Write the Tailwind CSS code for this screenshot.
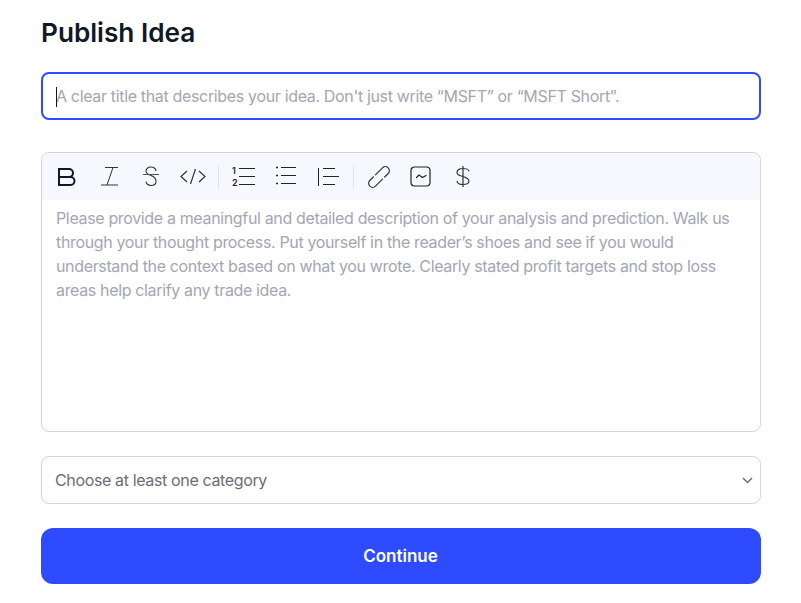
<!DOCTYPE html>
<html lang="en">
<head>
  <meta charset="UTF-8">
  <title>Publish Idea</title>
  <script src="https://cdn.jsdelivr.net/npm/@tailwindcss/browser@4"></script>
</head>
<body class="bg-white font-['Inter',sans-serif] overflow-hidden">
  <div class="w-[801px] h-[603px] px-[41px] pt-[16px]">
    <h1 class="text-[26.2px] leading-[34px] font-semibold text-[#111827]">Publish Idea</h1>

    <!-- title input -->
    <div class="relative mt-[22px] w-[720px] h-[48px] border-2 border-[#2f4bff] rounded-lg flex items-center pl-[13px]">
      <span class="absolute left-[13px] top-[13px] w-px h-[20px] bg-[#111827]"></span>
      <span class="text-base tracking-[-0.34px] text-[#a3a6b1] whitespace-nowrap">A clear title that describes your idea. Don't just write “MSFT” or “MSFT Short”.</span>
    </div>

    <!-- editor -->
    <div class="mt-[32px] w-[720px] h-[280px] border border-[#d4d4dc] rounded-lg overflow-hidden">
      <div class="h-[47px] bg-[#f7f8fd] flex items-center pl-[14px]">
        <svg width="21" height="20" viewBox="0 0 21 20" fill="none" stroke="#111827" stroke-width="2"><path d="M3 2h10a4 4 0 0 1 0 8H3zM3 10h11.500a4 4 0 0 1 0 8H3z"/></svg>
        <svg class="ml-[23px]" width="18" height="19" viewBox="0 0 18 19" fill="none" stroke="#333" stroke-width="1"><path d="M5 .5h13M1 18h17M13 .5 7 18"/></svg>
        <svg class="ml-[24px]" width="18" height="21" viewBox="0 0 18 21" fill="none" stroke="#333" stroke-width="1.100"><path d="M14 5c0-2-2-4-5-4S4 3 4 5s2 3.500 5 4.500 5 3 5 6-2 4-5 4-5-2-5-4"/><path d="M1 8.500h16" stroke="#555"/></svg>
        <svg class="ml-[20px]" width="26" height="17" viewBox="0 0 26 17" fill="none" stroke="#333" stroke-width="1.200"><path d="M7 3 1 8.500 7 14M19 3l6 5.500-6 5.500M15.500 1l-5 15"/></svg>
        <span class="ml-[12px] w-px h-[24px] bg-[#e2e3ea]"></span>
        <svg class="ml-[12px]" width="25" height="21" viewBox="0 0 25 21" fill="none" stroke="#222" stroke-width="1"><path d="M8 2.500h16M8 10.500h16M8 18.500h16"/><text x="1" y="8" font-size="9" font-weight="600" fill="#222" stroke="none" font-family="Inter">1</text><text x="1" y="20" font-size="9" font-weight="600" fill="#222" stroke="none" font-family="Inter">2</text></svg>
        <svg class="ml-[19px]" width="22" height="21" viewBox="0 0 22 21" fill="none" stroke="#222" stroke-width="1"><path d="M6 1.500h15M6 9.500h15M6 17.500h15"/><path d="M1 1.500h2M1 9.500h2M1 17.500h2" stroke-width="1.500"/></svg>
        <svg class="ml-[21px]" width="21" height="20" viewBox="0 0 21 20" fill="none" stroke="#222" stroke-width="1"><path d="M.500 1v18M5 1.500h12M5 9.500h16M5 17.500h12"/></svg>
        <span class="ml-[14px] w-px h-[24px] bg-[#e2e3ea]"></span>
        <svg class="ml-[14px]" width="22" height="22" viewBox="-11 -11 22 22" fill="none" stroke="#333" stroke-width="1.200" stroke-linecap="round"><g transform="rotate(-45)"><path d="M-1-4H9a4 4 0 0 1 0 8H4"/><path d="M1 4H-9a4 4 0 0 1 0-8H-4"/></g></svg>
        <svg class="ml-[20px]" width="21" height="21" viewBox="0 0 21 21" fill="none" stroke="#222" stroke-width="1.200"><rect x="1" y="1" width="19" height="19" rx="3.500"/><path d="M6.500 11.500 9 9l3.500 2.500L16 9.500" stroke-linecap="round"/></svg>
        <svg class="ml-[25px]" width="14" height="21" viewBox="0 0 14 21" fill="none" stroke="#333" stroke-width="1.200"><path d="M7 0v21M13 5.500C13 3.500 10 2.500 7 2.500S1 3.500 1 6.500 4 9.500 7 10.500s6 2 6 4.500-3 3.500-6 3.500-6-1-6-3.500"/></svg>
      </div>
      <p class="px-[14px] pt-[6px] text-base tracking-[-0.35px] leading-[24px] text-[#a3a6b1]">Please provide a meaningful and detailed description of your analysis and prediction. Walk us through your thought process. Put yourself in the reader’s shoes and see if you would understand the context based on what you wrote. Clearly stated profit targets and stop loss areas help clarify any trade idea.</p>
    </div>

    <!-- category select -->
    <div class="mt-[24px] w-[720px] h-[48px] border border-[#d4d4dc] rounded-lg flex items-center justify-between pl-[13px] pr-[7px]">
      <span class="text-base tracking-[-0.36px] text-[#6b6d78]">Choose at least one category</span>
      <svg width="11" height="7" viewBox="0 0 11 7" fill="none" stroke="#6b6d78" stroke-width="1.500"><path d="M1 1l4.500 4.500L10 1"/></svg>
    </div>

    <button class="mt-[24px] w-[720px] h-[56px] rounded-xl bg-[#2f4bff] text-white text-[17px] font-semibold pt-[1px] pr-[1px]">Continue</button>
  </div>
</body>
</html>
